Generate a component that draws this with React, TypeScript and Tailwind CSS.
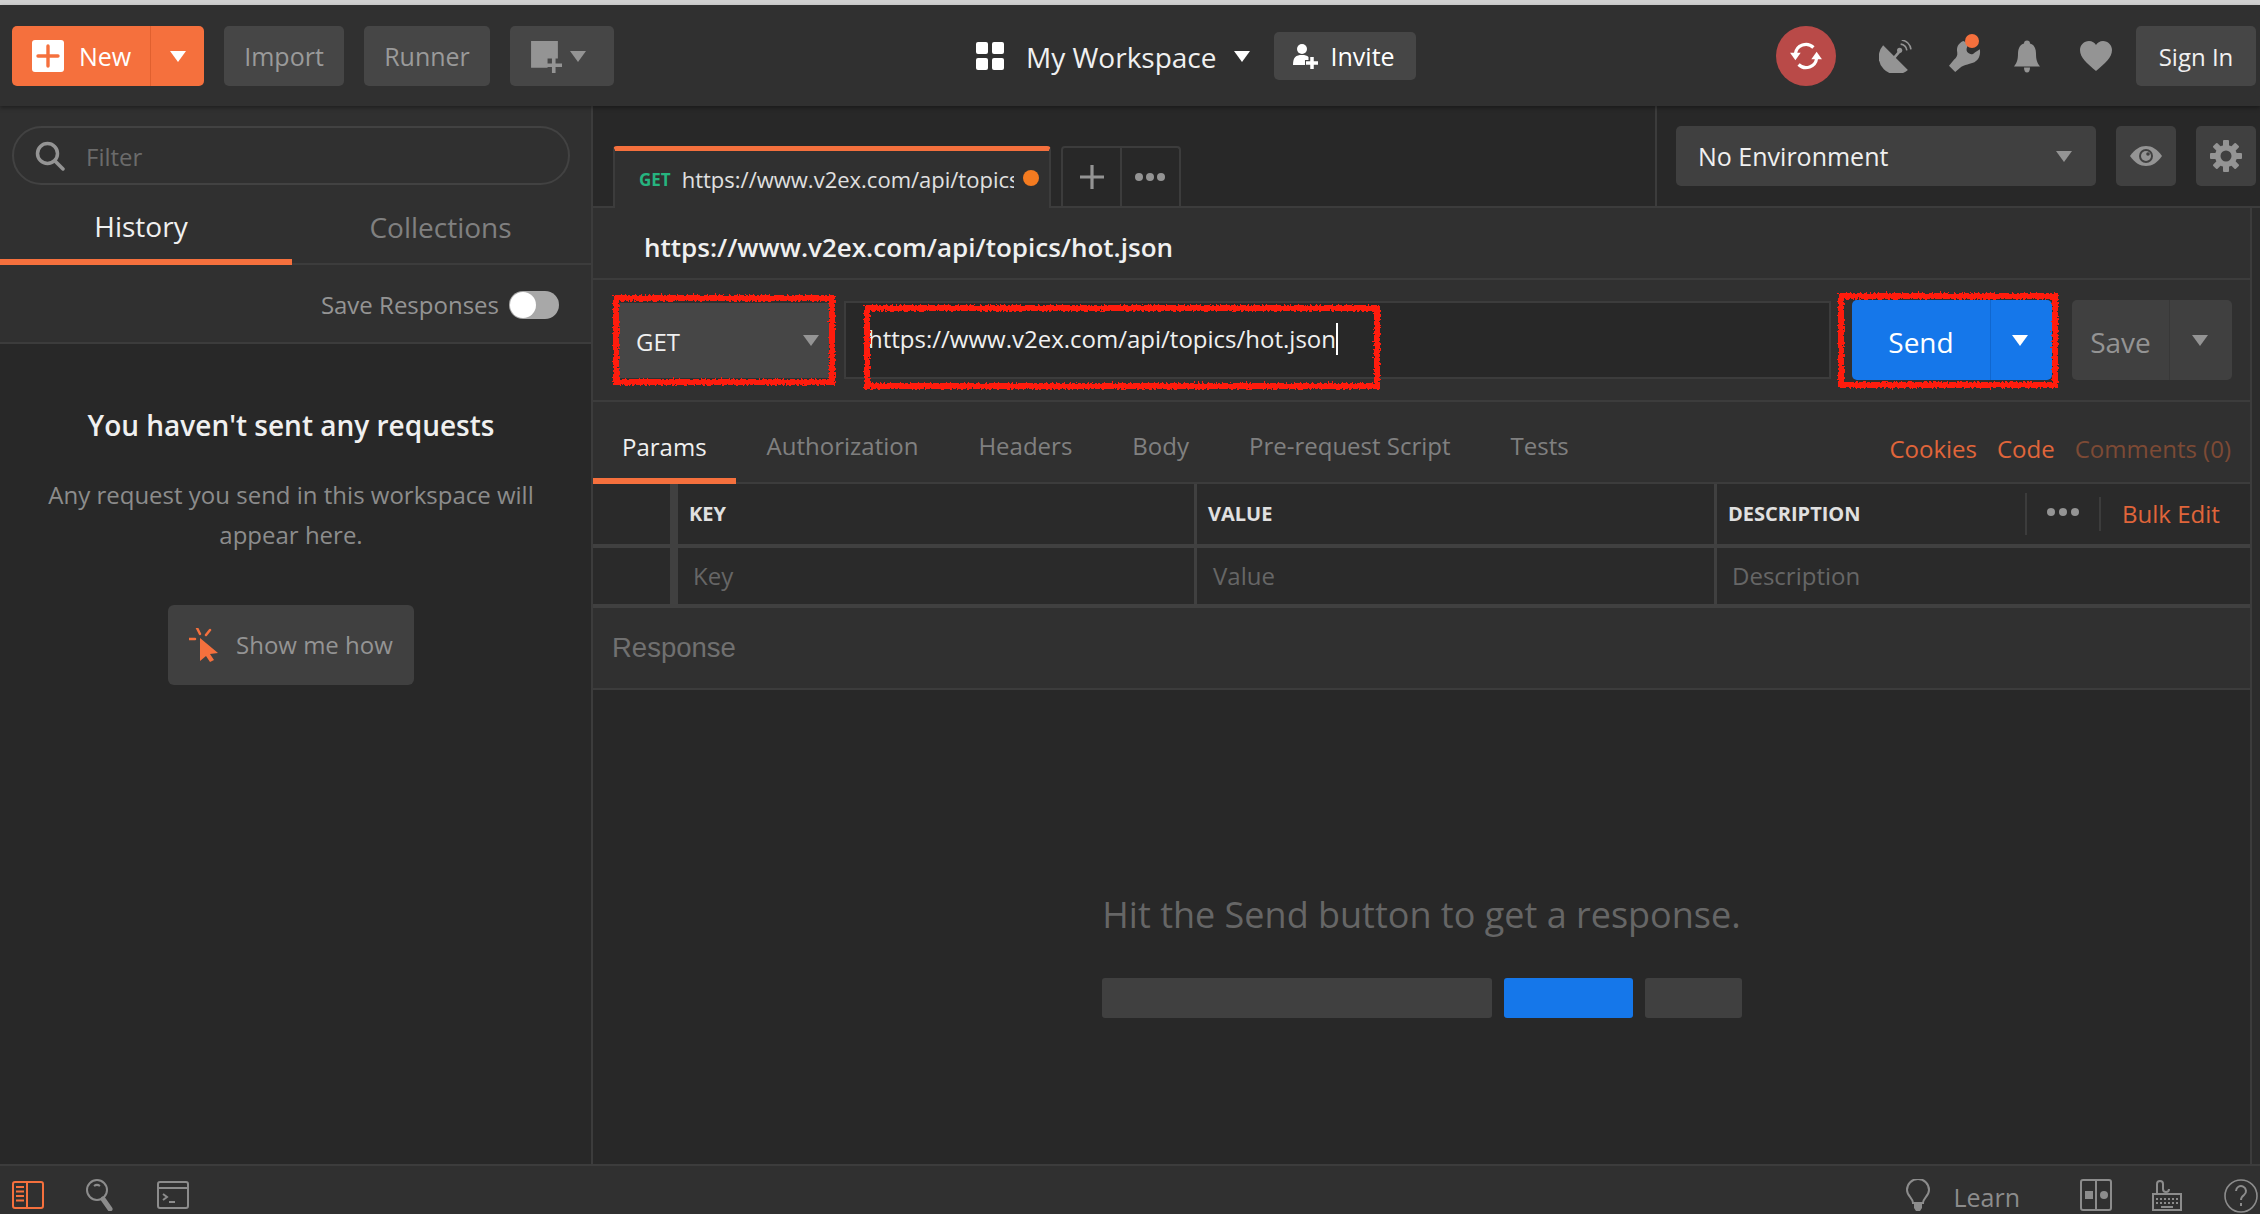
import { ReactNode } from "react"

const Caret = ({ className = "" }: { className?: string }) => (
  <svg viewBox="0 0 16 11" className={`w-[16px] h-[11px] ${className}`}>
    <path d="M0 0h16L8 11z" fill="currentColor" />
  </svg>
)

// hand drawn looking red marker box from the annotation on the screenshot
const RedBox = ({ className, w, h }: { className: string; w: number; h: number }) => (
  <svg className={`absolute pointer-events-none ${className}`} width={w} height={h} viewBox={`0 0 ${w} ${h}`}>
    <defs>
      <filter id={`rough-${w}`} x="-5%" y="-5%" width="110%" height="110%">
        <feTurbulence type="fractalNoise" baseFrequency="0.5" numOctaves="2" seed="4" />
        <feDisplacementMap in="SourceGraphic" scale="6" />
      </filter>
    </defs>
    <rect x="5" y="5" width={w - 10} height={h - 10} fill="none" stroke="#ff1c10" strokeWidth="6" filter={`url(#rough-${w})`} />
  </svg>
)

function TopButton({ children, className = "" }: { children: ReactNode; className?: string }) {
  return (
    <div className={`h-[60px] rounded-[5px] bg-[#464646] flex items-center text-[25px] text-[#9a9a9a] ${className}`}>
      {children}
    </div>
  )
}

function Header() {
  return (
    <header className="h-[101px] shrink-0 bg-[#303030] flex items-start pt-[21px] pl-[12px] relative z-10 shadow-[0_2px_4px_rgba(0,0,0,0.35)]">
      <div className="w-[192px] h-[60px] rounded-[5px] bg-[#f5703d] flex text-white text-[25px]">
        <div className="w-[139px] flex items-center pl-[20px] gap-[15px] border-r border-r-[#e0602f]">
          <div className="w-[32px] h-[32px] rounded-[3px] bg-white flex items-center justify-center">
            <svg viewBox="0 0 24 24" className="w-[24px] h-[24px]">
              <path d="M12 2v20M2 12h20" stroke="#f5703d" strokeWidth="3.4" strokeLinecap="round" />
            </svg>
          </div>
          <span className="pt-[2px]">New</span>
        </div>
        <div className="flex-1 flex items-center justify-center">
          <Caret className="text-white" />
        </div>
      </div>
      <TopButton className="w-[120px] ml-[20px] justify-center pt-[2px]">Import</TopButton>
      <TopButton className="w-[126px] ml-[20px] justify-center pt-[2px]">Runner</TopButton>
      <TopButton className="w-[104px] ml-[20px] gap-[8px] pl-[19px]">
        <svg viewBox="0 0 32 32" className="w-[33px] h-[33px]">
          <path d="M2 1h26v17h-10v9H2z" fill="#949494" />
          <path d="M24 17v15M17 24.500h15" stroke="#949494" strokeWidth="3.500" />
        </svg>
        <Caret className="text-[#949494]" />
      </TopButton>

      <div className="ml-[362px] flex items-center h-[60px] text-white">
        <div className="grid grid-cols-2 gap-[4px] w-[28px]">
          <span className="h-[12px] rounded-[2px] bg-white" />
          <span className="h-[12px] rounded-[2px] bg-white" />
          <span className="h-[12px] rounded-[2px] bg-white" />
          <span className="h-[12px] rounded-[2px] bg-white" />
        </div>
        <span className="ml-[22px] pt-[2px] text-[28px] text-[#f0f0f0]">My Workspace</span>
        <Caret className="ml-[17px] text-white" />
        <div className="ml-[24px] w-[142px] h-[48px] rounded-[5px] bg-[#464646] flex items-center pl-[18px] gap-[13px] text-[25px] font-medium">
          <svg viewBox="0 0 26 26" className="w-[26px] h-[26px]">
            <circle cx="10" cy="6" r="5" fill="#fff" />
            <path d="M1 22c0-8 3-10 9-10 3 0 5 .5 6.500 2v3H13v5z" fill="#fff" />
            <path d="M20 14v12M14 20h12" stroke="#fff" strokeWidth="3.500" />
          </svg>
          <span className="pt-[1px]">Invite</span>
        </div>
      </div>

      <div className="ml-auto flex items-start pr-[4px]">
        <div className="w-[60px] h-[60px] rounded-full bg-[#b94a48] flex items-center justify-center">
          <svg viewBox="0 0 32 32" className="w-[34px] h-[34px]" fill="none">
            <path d="M6 14a10 10 0 0 1 17-6" stroke="#fff" strokeWidth="3" />
            <path d="M1 13h10l-5 7z" fill="#fff" />
            <path d="M26 18a10 10 0 0 1-17 6" stroke="#fff" strokeWidth="3" />
            <path d="M21 19h10l-5-7z" fill="#fff" />
          </svg>
        </div>
        <div className="ml-[43px] h-[60px] flex items-center">
          <svg viewBox="0 0 32 32" className="w-[33px] h-[33px]" fill="none">
            <path d="M4 5A17 17 0 0 0 28 29Z" fill="#949494" />
            <path d="M14 18l6-7" stroke="#949494" strokeWidth="2.500" />
            <circle cx="20" cy="10" r="2.500" fill="#949494" />
            <path d="M21 4a7 7 0 0 1 6 6M22 0a11 11 0 0 1 9 9" stroke="#949494" strokeWidth="1.600" />
          </svg>
        </div>
        <div className="ml-[37px] h-[60px] flex items-center relative">
          <svg viewBox="0 0 32 32" className="w-[33px] h-[33px]">
            <path d="M14 1c-5 2-7 6-6 11 .5 3-1 5-3 7l-5 6 6 6 6-5c3-2 5-2 8-3 7-1 11-6 10-14l-5 3c-2 3-7 2-8-2 0-3 1-5 3-6z" fill="#949494" />
          </svg>
          <span className="absolute left-[16px] top-[8px] w-[14px] h-[14px] rounded-full bg-[#f5703d]" />
        </div>
        <div className="ml-[32px] h-[60px] flex items-center">
          <svg viewBox="0 0 26 32" className="w-[26px] h-[33px]">
            <path d="M13 0c2 0 3 1 3 3 4 1 6 5 6 10 0 6 1 9 4 13H0c3-4 4-7 4-13 0-5 2-9 6-10 0-2 1-3 3-3z" fill="#949494" />
            <path d="M10 27h6c0 3-1 5-3 5s-3-2-3-5z" fill="#949494" />
          </svg>
        </div>
        <div className="ml-[40px] h-[60px] flex items-center">
          <svg viewBox="0 0 32 30" className="w-[32px] h-[30px]">
            <path d="M16 30C7 22 0 17 0 9c0-5 4-9 9-9 3 0 6 2 7 4 1-2 4-4 7-4 5 0 9 4 9 9 0 8-7 13-16 21z" fill="#949494" />
          </svg>
        </div>
        <div className="ml-[24px] w-[120px] h-[60px] pt-[2px] rounded-[5px] bg-[#464646] flex items-center justify-center text-[24px] text-[#f0f0f0]">
          Sign In
        </div>
      </div>
    </header>
  )
}

function Sidebar() {
  return (
    <aside className="w-[593px] shrink-0 border-r-2 border-r-[#3c3c3c] flex flex-col">
      <div className="bg-[#303030] h-[238px] shrink-0 flex flex-col border-b-2 border-b-[#3c3c3c]">
        <div className="px-[12px] pt-[20px]">
          <div className="w-[558px] h-[59px] rounded-full border-2 border-[#424242] flex items-center pl-[21px] gap-[21px] text-[24px] text-[#6b6b6b]">
            <svg viewBox="0 0 30 30" className="w-[30px] h-[30px]" fill="none">
              <circle cx="12.500" cy="12.500" r="10" stroke="#949494" strokeWidth="3.500" />
              <path d="M20 20l8 8" stroke="#949494" strokeWidth="3.500" strokeLinecap="round" />
            </svg>
            <span className="pt-[2px]">Filter</span>
          </div>
        </div>
        <div className="flex h-[80px] border-b-2 border-b-[#3c3c3c] text-[28px]">
          <div className="w-[292px] h-[80px] border-b-[6px] border-b-[#f5703d] text-[#f0f0f0] flex items-center justify-center pr-[10px] pt-[8px]">
            History
          </div>
          <div className="flex-1 flex items-center justify-center text-[#808080] pr-[2px] pt-[5px]">Collections</div>
        </div>
        <div className="flex-1 flex items-center justify-end pr-[32px] gap-[10px] text-[24px] text-[#949494] pt-[3px]">
          <span>Save Responses</span>
          <div className="w-[50px] h-[28px] rounded-full bg-[#a8a8a8] relative">
            <span className="absolute left-[1px] top-[1px] w-[26px] h-[26px] rounded-full bg-white" />
          </div>
        </div>
      </div>
      <div className="flex flex-col items-center pt-[61px] pr-[9px]">
        <div className="text-[28px] font-semibold text-[#f0f0f0] leading-[40px]">You haven't sent any requests</div>
        <p className="mt-[30px] w-[520px] text-center text-[24px] leading-[40px] text-[#8c8c8c]">
          Any request you send in this workspace will appear here.
        </p>
        <div className="mt-[50px] w-[246px] h-[80px] rounded-[6px] bg-[#404040] flex items-center pl-[21px] gap-[17px] text-[24px] text-[#949494]">
          <svg viewBox="0 0 30 34" className="w-[30px] h-[34px]">
            <path d="M11 10l0 23 6-5 4 6 4-2-4-6 8-1z" fill="#f5703d" />
            <path d="M8 0l3 6M21 2l-4 5M0 11h6" stroke="#f5703d" strokeWidth="2.500" strokeLinecap="round" />
          </svg>
          <span>Show me how</span>
        </div>
      </div>
    </aside>
  )
}

function TabStrip() {
  return (
    <div className="h-[102px] shrink-0 flex bg-[#282828] border-b-2 border-b-[#3c3c3c]">
      <div className="flex-1 flex pt-[40px] pl-[20px]">
        <div className="w-[438px] h-[62px] -mb-[2px] rounded-t-[4px] border-t-[5px] border-t-[#f5703d] border-x-2 border-x-[#3c3c3c] bg-[#303030] flex items-center pl-[24px] relative z-10">
          <span className="text-[17px] font-bold text-[#26b47f]">GET</span>
          <span className="ml-[11px] w-[332px] overflow-hidden whitespace-nowrap text-[22px] text-[#e0e0e0]">
            https://www.v2ex.com/api/topics/hot.json
          </span>
          <span className="ml-[9px] -mt-[4px] w-[16px] h-[16px] rounded-full bg-[#f47b20]" />
        </div>
        <div className="ml-[10px] w-[120px] h-[60px] rounded-t-[4px] border-2 border-b-0 border-[#3c3c3c] flex">
          <div className="w-[59px] flex items-center justify-center border-r-2 border-r-[#3c3c3c]">
            <svg viewBox="0 0 24 24" className="w-[24px] h-[24px]">
              <path d="M12 0v24M0 12h24" stroke="#949494" strokeWidth="3.200" />
            </svg>
          </div>
          <div className="flex-1 flex items-center justify-center gap-[3px] pr-[2px]">
            <span className="w-[8px] h-[8px] rounded-full bg-[#949494]" />
            <span className="w-[8px] h-[8px] rounded-full bg-[#949494]" />
            <span className="w-[8px] h-[8px] rounded-full bg-[#949494]" />
          </div>
        </div>
      </div>
      <div className="w-[605px] border-l-2 border-l-[#3c3c3c] flex items-start pt-[20px] pl-[19px] gap-[20px]">
        <div className="w-[420px] h-[60px] rounded-[5px] bg-[#404040] flex items-center justify-between pl-[22px] pr-[24px] text-[25px] font-medium text-[#f0f0f0]">
          <span className="pt-[2px]">No Environment</span>
          <Caret className="text-[#949494]" />
        </div>
        <div className="w-[60px] h-[60px] rounded-[5px] bg-[#404040] flex items-center justify-center">
          <svg viewBox="0 0 32 20" className="w-[32px] h-[20px]">
            <path d="M0 10C5 3 10 0 16 0s11 3 16 10c-5 7-10 10-16 10S5 17 0 10z" fill="#949494" />
            <circle cx="16" cy="10" r="7" fill="#404040" />
            <circle cx="16" cy="10" r="5" fill="#949494" />
            <circle cx="18" cy="8" r="1.800" fill="#404040" />
          </svg>
        </div>
        <div className="w-[60px] h-[60px] rounded-[5px] bg-[#404040] flex items-center justify-center">
          <svg viewBox="0 0 32 32" className="w-[32px] h-[32px]">
            <g fill="#949494">
              <circle cx="16" cy="16" r="11" />
              <rect x="13" y="0" width="6" height="32" rx="1" />
              <rect x="13" y="0" width="6" height="32" rx="1" transform="rotate(45 16 16)" />
              <rect x="13" y="0" width="6" height="32" rx="1" transform="rotate(90 16 16)" />
              <rect x="13" y="0" width="6" height="32" rx="1" transform="rotate(135 16 16)" />
            </g>
            <circle cx="16" cy="16" r="5.500" fill="#404040" />
          </svg>
        </div>
      </div>
    </div>
  )
}

function RequestBar() {
  return (
    <div className="h-[122px] shrink-0 border-b-2 border-b-[#3c3c3c] flex items-start pl-[26px] relative">
      <div className="mt-[23px] w-[210px] h-[75px] bg-[#464646] flex items-center justify-between pl-[17px] pr-[10px] text-[24px] font-medium text-[#f0f0f0] relative">
        <span className="pt-[2px]">GET</span>
        <Caret className="text-[#949494]" />
        <RedBox className="-left-[8px] -top-[10px]" w={226} h={94} />
      </div>
      <div className="mt-[21px] ml-[15px] w-[987px] h-[78px] bg-[#282828] border-2 border-[#3c3c3c] flex items-center pl-[22px] text-[24px] text-[#f0f0f0] relative">
        <span className="-mt-[3px]">https://www.v2ex.com/api/topics/hot.json</span>
        <span className="w-[2px] h-[32px] bg-white -mt-[3px]" />
        <RedBox className="left-[16px] -top-[0px]" w={520} h={88} />
      </div>
      <div className="mt-[20px] ml-[21px] w-[200px] h-[80px] rounded-[5px] bg-[#1577ea] flex text-white text-[28px] font-medium relative">
        <div className="w-[139px] pt-[3px] flex items-center justify-center border-r border-r-[#1067cf]">Send</div>
        <div className="flex-1 flex items-center justify-center pr-[3px]">
          <Caret className="text-white" />
        </div>
        <RedBox className="-left-[16px] -top-[9px]" w={224} h={99} />
      </div>
      <div className="mt-[20px] ml-[20px] w-[160px] h-[80px] rounded-[5px] bg-[#404040] flex text-[#949494] text-[28px] font-medium">
        <div className="w-[98px] pt-[3px] flex items-center justify-center border-r border-r-[#383838]">Save</div>
        <div className="flex-1 flex items-center justify-center pr-[2px]">
          <Caret className="text-[#949494]" />
        </div>
      </div>
    </div>
  )
}

function ParamTabs() {
  const tabs = ["Authorization", "Headers", "Body", "Pre-request Script", "Tests"]
  return (
    <div className="h-[82px] shrink-0 border-b-2 border-b-[#3c3c3c] flex text-[24px] text-[#808080]">
      <div className="h-[82px] px-[29px] flex items-center border-b-[6px] border-b-[#f5703d] text-[#f0f0f0] pt-[13px]">Params</div>
      {tabs.map((t, i) => (
        <div key={t} className={`px-[30px] pt-[8px] flex items-center ${i === 0 ? "pl-[31px]" : ""}`}>
          {t}
        </div>
      ))}
      <div className="ml-auto pr-[19px] pt-[13px] flex items-center gap-[20px] text-[#e0653a]">
        <span>Cookies</span>
        <span>Code</span>
        <span className="text-[#7d4a35]">Comments (0)</span>
      </div>
    </div>
  )
}

function ParamTable() {
  return (
    <div className="shrink-0">
      <div className="h-[64px] flex border-b-4 border-b-[#404040] bg-[#2a2a2a] text-[20px] font-bold text-[#e0e0e0]">
        <div className="w-[85px] border-r-[8px] border-r-[#404040]" />
        <div className="w-[519px] border-r-[3px] border-r-[#404040] flex items-center pl-[11px]">KEY</div>
        <div className="w-[520px] border-r-[3px] border-r-[#404040] flex items-center pl-[11px]">VALUE</div>
        <div className="flex-1 flex items-center pl-[11px]">
          <span>DESCRIPTION</span>
          <div className="ml-auto h-[42px] border-l-2 border-l-[#3c3c3c] w-[74px] flex items-center justify-center gap-[4px] -mt-[1px]">
            <span className="w-[8px] h-[8px] rounded-full bg-[#949494] -mt-[3px]" />
            <span className="w-[8px] h-[8px] rounded-full bg-[#949494] -mt-[3px]" />
            <span className="w-[8px] h-[8px] rounded-full bg-[#949494] -mt-[3px]" />
          </div>
          <div className="h-[34px] border-l-2 border-l-[#3c3c3c] w-[151px] pl-[21px] flex items-center text-[24px] font-normal text-[#e0653a]">
            Bulk Edit
          </div>
        </div>
      </div>
      <div className="h-[60px] flex border-b-4 border-b-[#404040] bg-[#2a2a2a] text-[24px] text-[#666666]">
        <div className="w-[85px] border-r-[8px] border-r-[#404040]" />
        <div className="w-[519px] border-r-[3px] border-r-[#404040] flex items-center pl-[15px]">Key</div>
        <div className="w-[520px] border-r-[3px] border-r-[#404040] flex items-center pl-[16px]">Value</div>
        <div className="flex-1 flex items-center pl-[15px]">Description</div>
      </div>
    </div>
  )
}

function MainPane() {
  return (
    <main className="flex-1 min-w-0 flex flex-col">
      <TabStrip />
      <div className="flex-1 min-h-0 flex">
        <div className="flex-1 min-w-0 flex flex-col border-r-2 border-r-[#3c3c3c]">
          <div className="h-[72px] shrink-0 bg-[#303030] border-b-2 border-b-[#3c3c3c] flex items-center pl-[51px] pt-[9px] text-[26px] font-semibold text-[#f0f0f0]">
            https://www.v2ex.com/api/topics/hot.json
          </div>
          <div className="bg-[#303030]">
            <RequestBar />
            <ParamTabs />
          </div>
          <ParamTable />
          <div className="h-[82px] shrink-0 bg-[#303030] border-b-2 border-b-[#3c3c3c] flex items-center pl-[19px] font-['Liberation_Sans',sans-serif] text-[27.500px] text-[#707070]">
            Response
          </div>
          <div className="flex-1 flex flex-col items-center pt-[202px]">
            <div className="text-[36px] text-[#666666] leading-[46px]">Hit the Send button to get a response.</div>
            <div className="mt-[40px] flex gap-[12px]">
              <span className="w-[390px] h-[40px] rounded-[3px] bg-[#404040]" />
              <span className="w-[129px] h-[40px] rounded-[3px] bg-[#1577ea]" />
              <span className="w-[97px] h-[40px] rounded-[3px] bg-[#404040]" />
            </div>
          </div>
        </div>
        <div className="w-[8px] shrink-0 bg-[#2c2c2c]" />
      </div>
    </main>
  )
}

function Footer() {
  return (
    <footer className="h-[50px] shrink-0 bg-[#303030] border-t-2 border-t-[#3c3c3c] flex items-start pt-[15px] pl-[12px]">
      <svg viewBox="0 0 32 28" className="w-[32px] h-[28px]" fill="none" stroke="#f5703d">
        <rect x="1" y="1" width="30" height="26" rx="2" strokeWidth="2" />
        <path d="M15 1v26" strokeWidth="2" />
        <path d="M4 6h8M4 10.500h8M4 15h8M4 19.500h8" strokeWidth="2" />
      </svg>
      <svg viewBox="0 0 28 32" className="ml-[41px] -mt-[2px] w-[28px] h-[32px]" fill="none" stroke="#8c8c8c">
        <circle cx="12" cy="11" r="10" strokeWidth="2" />
        <path d="M9 7a5 5 0 0 1 6 0" strokeWidth="2" />
        <path d="M18 20l7 10" strokeWidth="5" strokeLinecap="round" />
      </svg>
      <svg viewBox="0 0 32 28" className="ml-[44px] w-[32px] h-[28px]" fill="none" stroke="#8c8c8c">
        <rect x="1" y="1" width="30" height="26" rx="2" strokeWidth="2" />
        <path d="M1 7h30" strokeWidth="2" />
        <path d="M6 13l4 3-4 3M12 21h6" strokeWidth="2" />
      </svg>

      <div className="ml-auto flex items-start pr-[2px]">
        <svg viewBox="0 0 24 32" className="-mt-[2px] w-[24px] h-[32px]" fill="none">
          <path d="M7 24c0-5-6-7-6-13a11 11 0 0 1 22 0c0 6-6 8-6 13z" stroke="#8c8c8c" strokeWidth="2" />
          <path d="M8 25h8v4l-2 3h-4l-2-3z" fill="#8c8c8c" />
        </svg>
        <span className="ml-[23px] text-[25px] leading-[32px] font-medium text-[#8c8c8c]">Learn</span>
        <svg viewBox="0 0 32 32" className="ml-[60px] -mt-[2px] w-[32px] h-[32px]" fill="none" stroke="#8c8c8c">
          <rect x="1" y="1" width="30" height="30" rx="2" strokeWidth="2" />
          <path d="M16 1v30" strokeWidth="2" />
          <rect x="5" y="12" width="8" height="8" fill="#8c8c8c" stroke="none" />
          <circle cx="24" cy="16" r="4" fill="#8c8c8c" stroke="none" />
        </svg>
        <svg viewBox="0 0 30 32" className="ml-[40px] -mt-[2px] w-[30px] h-[32px]" fill="none" stroke="#8c8c8c">
          <rect x="1" y="15" width="28" height="16" strokeWidth="2" />
          <path d="M5 15V5a3 3 0 0 1 6 0v5a3 3 0 0 0 6 0" strokeWidth="2" />
          <path d="M4 20h22M4 24h22" strokeWidth="2" strokeDasharray="2 2" />
          <path d="M9 28h12" strokeWidth="2" />
        </svg>
        <svg viewBox="0 0 34 34" className="ml-[42px] -mt-[2px] w-[34px] h-[34px]" fill="none" stroke="#8c8c8c">
          <circle cx="17" cy="17" r="16" strokeWidth="1.600" />
          <path d="M12 12a5 5 0 1 1 8 4c-2 1.500-3 2.500-3 5" strokeWidth="2" />
          <path d="M17 24v3" strokeWidth="2" />
        </svg>
      </div>
    </footer>
  )
}

export default function App() {
  return (
    <div className="w-[2260px] h-[1214px] overflow-hidden flex flex-col bg-[#282828] font-['Open_Sans',sans-serif]">
      <div className="h-[5px] shrink-0 bg-[#d0d0d0]" />
      <Header />
      <div className="flex-1 min-h-0 flex">
        <Sidebar />
        <MainPane />
      </div>
      <Footer />
    </div>
  )
}
